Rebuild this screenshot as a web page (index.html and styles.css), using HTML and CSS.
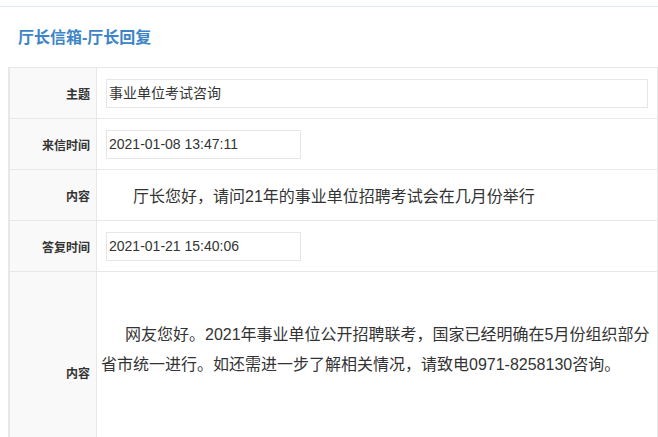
FILE: index.html
```html
<!DOCTYPE html>
<html>
<head>
    <meta charset="utf-8">
    <title>厅长信箱-厅长回复</title>
    <link rel="stylesheet" href="styles.css">
</head>
<body>
    <div class="top-bar"></div>

    <h1 class="page-title">厅长信箱-厅长回复</h1>

    <table class="mail-table">
        <tr class="row">
            <td class="label">主题</td>
            <td class="cell"><div class="field field-wide">事业单位考试咨询</div></td>
        </tr>
        <tr class="row">
            <td class="label">来信时间</td>
            <td class="cell"><div class="field">2021-01-08 13:47:11</div></td>
        </tr>
        <tr class="row">
            <td class="label">内容</td>
            <td class="cell content">厅长您好，请问21年的事业单位招聘考试会在几月份举行</td>
        </tr>
        <tr class="row">
            <td class="label">答复时间</td>
            <td class="cell"><div class="field">2021-01-21 15:40:06</div></td>
        </tr>
        <tr class="row reply-row">
            <td class="label">内容</td>
            <td class="cell reply">网友您好。2021年事业单位公开招聘联考，国家已经明确在5月份组织部分省市统一进行。如还需进一步了解相关情况，请致电0971-8258130咨询。</td>
        </tr>
    </table>
</body>
</html>
```

FILE: styles.css
```css
/* reply page */

body {
    margin: 0;
    background: #fff;
    color: #333;
    font-family: "Liberation Sans", "Noto Sans CJK SC", sans-serif;
}

.top-bar {
    height: 6px;
    border-bottom: 1px solid #dde9f3;
}

.page-title {
    margin: 0;
    padding: 19px 0 0 18px;
    height: 41px;
    line-height: 24px;
    font-size: 16px;
    font-weight: bold;
    color: #3d85c6;
}

.mail-table {
    margin-left: 8px;
    width: 650px;
    border-collapse: collapse;
    border-left: 2px solid #e8e8e8;
}

.mail-table td {
    border: 1px solid #e8e8e8;
}

.row {
    height: 51px;
}

.label {
    width: 81px;
    padding: 0 6px 0 0;
    text-align: right;
    font-size: 12px;
    font-weight: bold;
    color: #333;
    background: #f9f9f9;
}

.cell {
    padding: 0 9px;
    font-size: 14px;
}

.field {
    width: 191px;
    height: 27px;
    line-height: 27px;
    padding-left: 2px;
    border: 1px solid #e6e6e6;
    background: #fff;
}

.field-wide {
    width: 538px;
}

.content {
    padding: 0 4px;
    font-size: 16px;
    text-indent: 32px;
}

.reply {
    vertical-align: top;
    padding: 48px 4px 92px 4px;
    font-size: 16px;
    line-height: 30px;
    text-indent: 24px;
}
```
